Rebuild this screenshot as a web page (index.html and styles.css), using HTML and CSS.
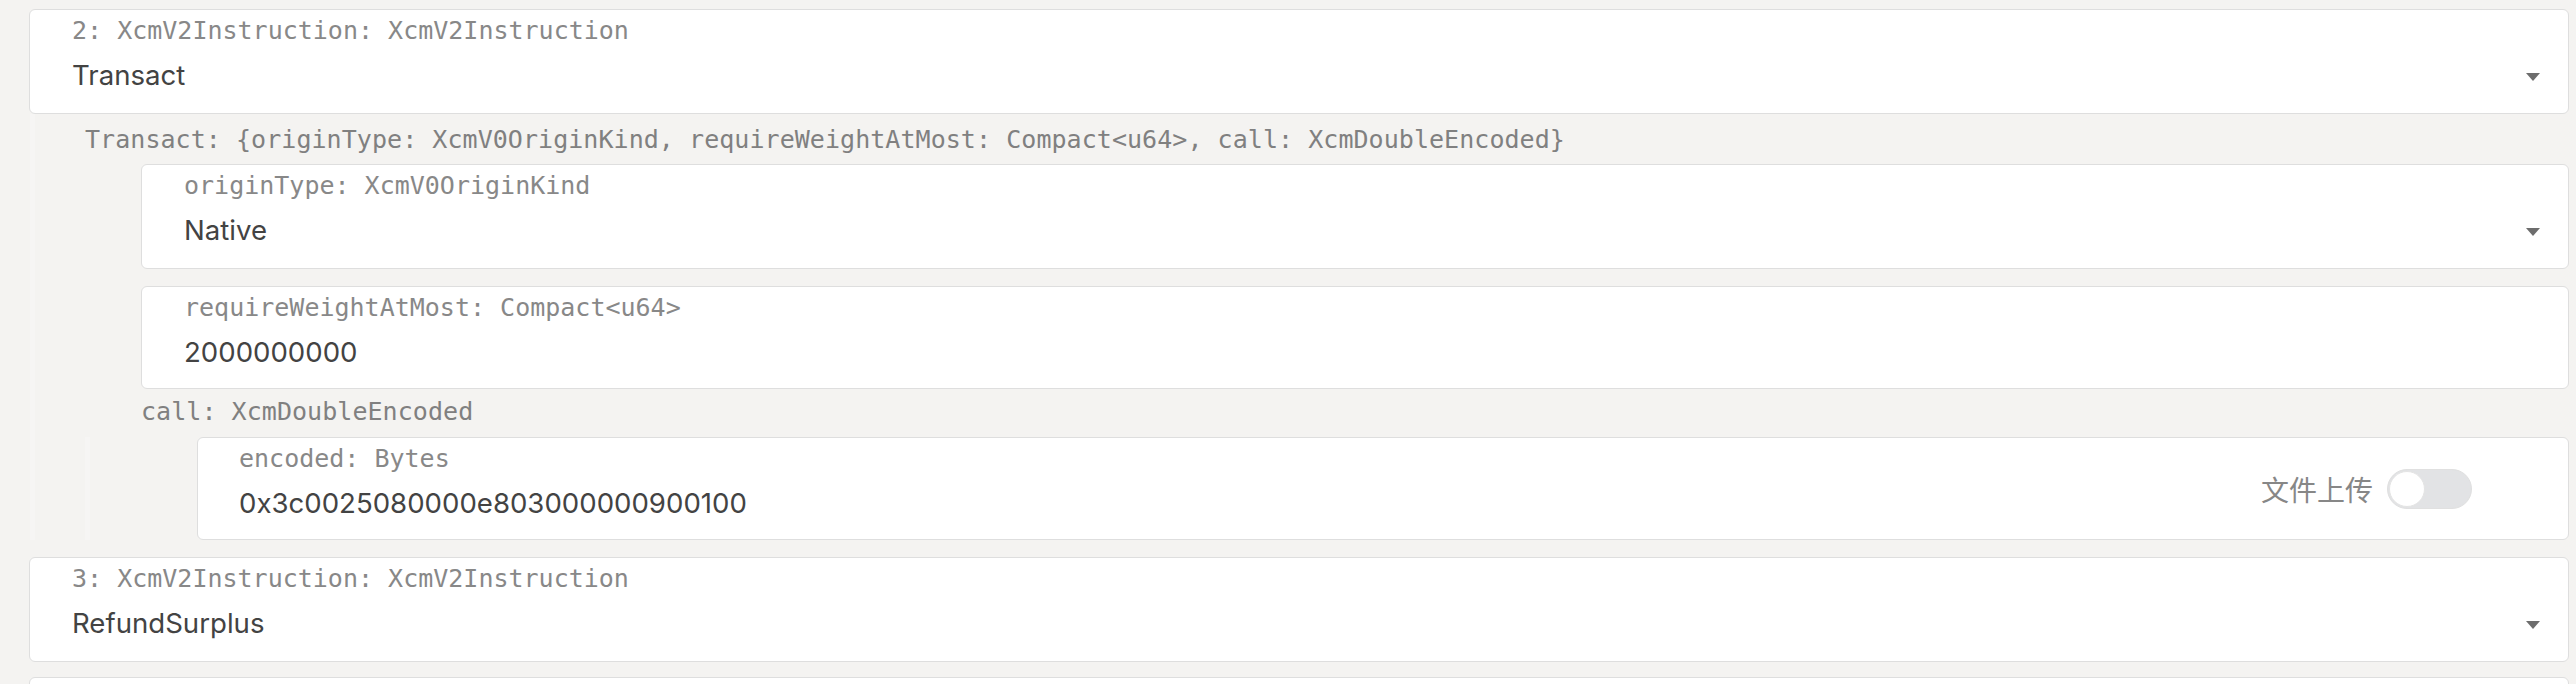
FILE: index.html
```html
<!DOCTYPE html>
<html lang="en">
<head>
<meta charset="utf-8">
<title>Transact params</title>
<link rel="stylesheet" href="styles.css">
</head>
<body>
<main class="page">
  <div class="field select">
    <div class="field-main">
      <div class="caption">2: XcmV2Instruction: XcmV2Instruction</div>
      <div class="value-row">
        <span class="value">Transact</span>
        <span class="caret"></span>
      </div>
    </div>
  </div>

  <div class="params">
    <div class="label label-top">Transact: {originType: XcmV0OriginKind, requireWeightAtMost: Compact&lt;u64&gt;, call: XcmDoubleEncoded}</div>
    <div class="indent">
      <div class="field select">
        <div class="field-main">
          <div class="caption">originType: XcmV0OriginKind</div>
          <div class="value-row">
            <span class="value">Native</span>
            <span class="caret"></span>
          </div>
        </div>
      </div>
      <div class="field input gap-top">
        <div class="field-main">
          <div class="caption">requireWeightAtMost: Compact&lt;u64&gt;</div>
          <div class="value-row">
            <span class="value">2000000000</span>
          </div>
        </div>
      </div>
      <div class="label label-call">call: XcmDoubleEncoded</div>
    </div>
    <div class="sub">
      <div class="field input with-toggle">
        <div class="field-main">
          <div class="caption">encoded: Bytes</div>
          <div class="value-row">
            <span class="value">0x3c0025080000e803000000900100</span>
          </div>
        </div>
        <div class="toggle-group">
          <span class="toggle-label">文件上传</span>
          <span class="toggle"><span class="knob"></span></span>
        </div>
      </div>
    </div>
  </div>

  <div class="field select gap-top">
    <div class="field-main">
      <div class="caption">3: XcmV2Instruction: XcmV2Instruction</div>
      <div class="value-row">
        <span class="value">RefundSurplus</span>
        <span class="caret"></span>
      </div>
    </div>
  </div>

  <div class="field select next"></div>
</main>
</body>
</html>
```

FILE: styles.css
```css
html, body {
  margin: 0;
  padding: 0;
  background: #f4f3f1;
}

body {
  overflow: hidden;
}

.page {
  padding: 9px 7px 0 29px;
}

.field {
  box-sizing: border-box;
  background: #ffffff;
  border: 1px solid #dedede;
  border-radius: 6px;
  display: flex;
  align-items: center;
  height: 105px;
}

.field.input {
  height: 103px;
}

.field-main {
  flex: 1;
  min-width: 0;
  align-self: stretch;
  padding: 9px 0 0 42px;
}

.caption {
  font-family: "DejaVu Sans Mono", monospace;
  font-size: 25px;
  line-height: 24px;
  color: #888888;
  white-space: nowrap;
}

.value-row {
  display: flex;
  align-items: center;
  justify-content: space-between;
  margin-top: 16px;
  height: 32px;
}

.value {
  font-family: Inter, "Noto Sans", sans-serif;
  font-size: 27.6px;
  line-height: 32px;
  color: #434343;
  white-space: nowrap;
}

.caret {
  width: 0;
  height: 0;
  border-left: 7px solid transparent;
  border-right: 7px solid transparent;
  border-top: 8px solid #6d6d6d;
  margin: 4px 28px 0 0;
}

.gap-top {
  margin-top: 17px;
}

.params {
  margin-left: 1px;
  border-left: 5px solid #f6f5f4;
  padding-left: 50px;
}

.label {
  font-family: "DejaVu Sans Mono", monospace;
  font-size: 25px;
  letter-spacing: 0.05px;
  line-height: 28px;
  color: #808080;
  white-space: nowrap;
}

.label-top {
  padding: 12px 0 10px;
}

.indent {
  padding-left: 56px;
}

.label-call {
  padding: 9px 0 11px;
}

.sub {
  border-left: 5px solid #f6f5f4;
  padding-left: 107px;
}

.with-toggle .field-main {
  padding-left: 41px;
}

.toggle-group {
  display: flex;
  align-items: center;
  gap: 14px;
  margin-right: 96px;
}

.toggle-label {
  font-family: "Noto Sans CJK SC", sans-serif;
  font-size: 28px;
  line-height: 32px;
  color: #878787;
}

.toggle {
  box-sizing: border-box;
  display: flex;
  align-items: center;
  width: 85px;
  height: 40px;
  border-radius: 20px;
  background: #e2e3e5;
  border: 1px solid #e0e0e0;
  padding: 1px;
}

.knob {
  box-sizing: border-box;
  width: 36px;
  height: 36px;
  border-radius: 50%;
  background: #ffffff;
  border: 1px solid #e4e4e4;
}

.next {
  margin-top: 15px;
}
```
